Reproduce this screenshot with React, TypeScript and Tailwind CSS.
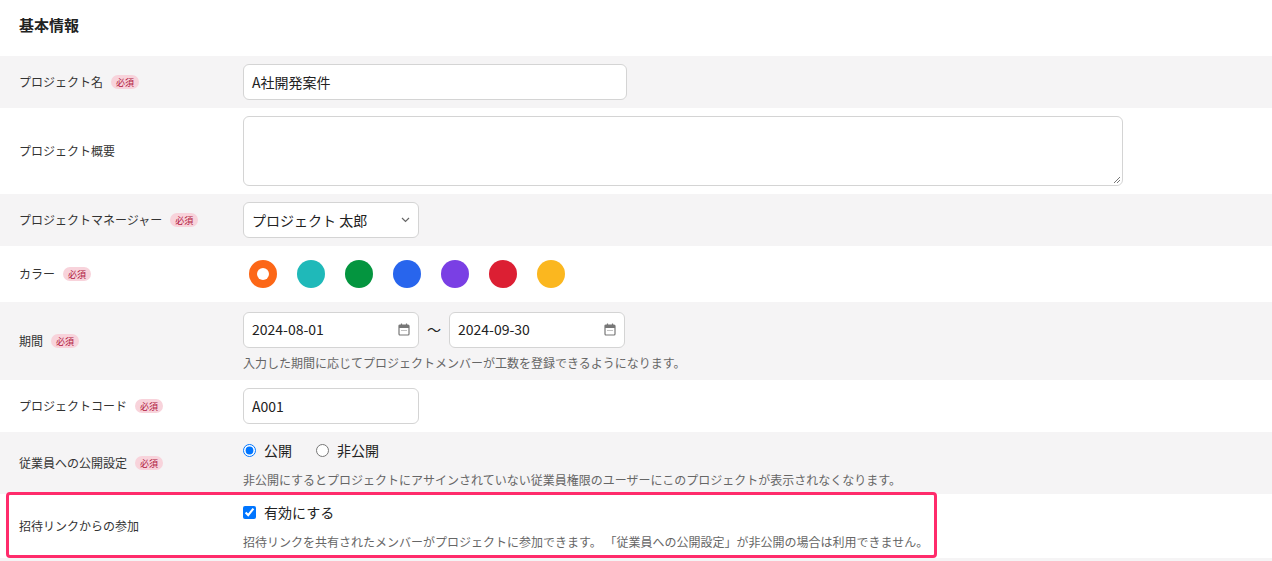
import React from "react";

const font = { fontFamily: '"Noto Sans CJK JP", "Noto Sans", sans-serif' };

function Badge() {
  return <span className="ml-2 inline-flex items-center rounded-full bg-[#f8d3db] px-[5px] h-[14px] text-[9px] leading-none text-[#b0163d]">必須</span>;
}

function Label({ t, req }: { t: string; req?: boolean }) {
  return (
    <div className="w-[243px] shrink-0 pl-[19px] flex items-center text-[12px] text-[#333]">
      {t}
      {req && <Badge />}
    </div>
  );
}

function Cal() {
  return (
    <svg width="12" height="13" viewBox="0 0 12 13" className="text-[#777]">
      <rect x="1" y="2" width="10" height="10" rx="1" fill="none" stroke="currentColor" strokeWidth="1.2" />
      <rect x="1" y="2" width="10" height="3" fill="currentColor" />
      <line x1="3.5" y1="0.5" x2="3.5" y2="3" stroke="currentColor" strokeWidth="1.2" />
      <line x1="8.5" y1="0.5" x2="8.5" y2="3" stroke="currentColor" strokeWidth="1.2" />
      <circle cx="4" cy="7.5" r="0.6" fill="currentColor" />
      <circle cx="6" cy="7.5" r="0.6" fill="currentColor" />
      <circle cx="8" cy="7.5" r="0.6" fill="currentColor" />
    </svg>
  );
}

const box = "border border-[#d4d4d4] rounded-[6px] bg-white";

export default function App() {
  const colors = ["#1fb9b9", "#04953f", "#2865ed", "#7a3fe4", "#dc1f33", "#fbb71f"];
  return (
    <div className="w-[1272px] h-[561px] bg-white text-[#222] overflow-hidden" style={font}>
      <div className="h-[56px] pl-[19px] pt-[14px] text-[15px] font-bold">基本情報</div>
      <div className="flex h-[52px] bg-[#f5f4f5]">
        <Label t="プロジェクト名" req />
        <div className="flex items-center">
          <div className={`${box} w-[384px] h-[36px] px-[8px] flex items-center text-[14px]`}>A社開発案件</div>
        </div>
      </div>
      <div className="flex h-[86px]">
        <Label t="プロジェクト概要" />
        <div className="flex items-center relative">
          <div className={`${box} w-[880px] h-[70px]`} />
          <svg className="absolute right-[2px] bottom-[10px]" width="8" height="8"><path d="M7 1L1 7M7 4L4 7" stroke="#777" /></svg>
        </div>
      </div>
      <div className="flex h-[52px] bg-[#f5f4f5]">
        <Label t="プロジェクトマネージャー" req />
        <div className="flex items-center">
          <div className={`${box} w-[176px] h-[36px] px-[8px] flex items-center justify-between text-[14px]`}>
            プロジェクト 太郎
            <svg width="9" height="6" viewBox="0 0 9 6"><path d="M1 1l3.5 3.5L8 1" fill="none" stroke="#666" strokeWidth="1.2" /></svg>
          </div>
        </div>
      </div>
      <div className="flex h-[56px]">
        <Label t="カラー" req />
        <div className="flex items-center gap-[20px] pl-[6px]">
          <div className="w-[28px] h-[28px] rounded-full bg-[#fc6717] flex items-center justify-center">
            <div className="w-[12px] h-[12px] rounded-full bg-white" />
          </div>
          {colors.map((c) => (
            <div key={c} className="w-[28px] h-[28px] rounded-full" style={{ backgroundColor: c }} />
          ))}
        </div>
      </div>
      <div className="flex h-[78px] bg-[#f5f4f5]">
        <Label t="期間" req />
        <div className="flex flex-col justify-center pt-[1px]">
          <div className="flex items-center">
            <div className={`${box} w-[176px] h-[36px] px-[8px] flex items-center justify-between text-[14px]`}>2024-08-01<Cal /></div>
            <span className="mx-[8px] text-[14px]">〜</span>
            <div className={`${box} w-[176px] h-[36px] px-[8px] flex items-center justify-between text-[14px]`}>2024-09-30<Cal /></div>
          </div>
          <div className="text-[12px] text-[#666] mt-[6px]">入力した期間に応じてプロジェクトメンバーが工数を登録できるようになります。</div>
        </div>
      </div>
      <div className="flex h-[52px]">
        <Label t="プロジェクトコード" req />
        <div className="flex items-center">
          <div className={`${box} w-[176px] h-[36px] px-[8px] flex items-center text-[14px]`}>A001</div>
        </div>
      </div>
      <div className="flex h-[62px] bg-[#f5f4f5]">
        <Label t="従業員への公開設定" req />
        <div className="flex flex-col pt-[8px]">
          <div className="flex items-center text-[14px]">
            <input type="radio" defaultChecked name="r" className="w-[13px] h-[13px] mr-[8px]" />公開
            <input type="radio" name="r" className="w-[13px] h-[13px] ml-[24px] mr-[8px]" />非公開
          </div>
          <div className="text-[12px] text-[#666] mt-[10px]">非公開にするとプロジェクトにアサインされていない従業員権限のユーザーにこのプロジェクトが表示されなくなります。</div>
        </div>
      </div>
      <div className="relative flex h-[64px]">
        <div className="absolute left-[6px] top-[-2px] w-[931px] h-[66px] border-[3px] border-[#ff2b6b] rounded-[4px] pointer-events-none" />
        <Label t="招待リンクからの参加" />
        <div className="flex flex-col pt-[8px]">
          <div className="flex items-center text-[14px]">
            <input type="checkbox" defaultChecked className="w-[13px] h-[13px] mr-[8px]" />有効にする
          </div>
          <div className="text-[12px] text-[#666] mt-[10px]">招待リンクを共有されたメンバーがプロジェクトに参加できます。 「従業員への公開設定」が非公開の場合は利用できません。</div>
        </div>
      </div>
      <div className="h-[10px] bg-[#f5f4f5]" />
    </div>
  );
}
